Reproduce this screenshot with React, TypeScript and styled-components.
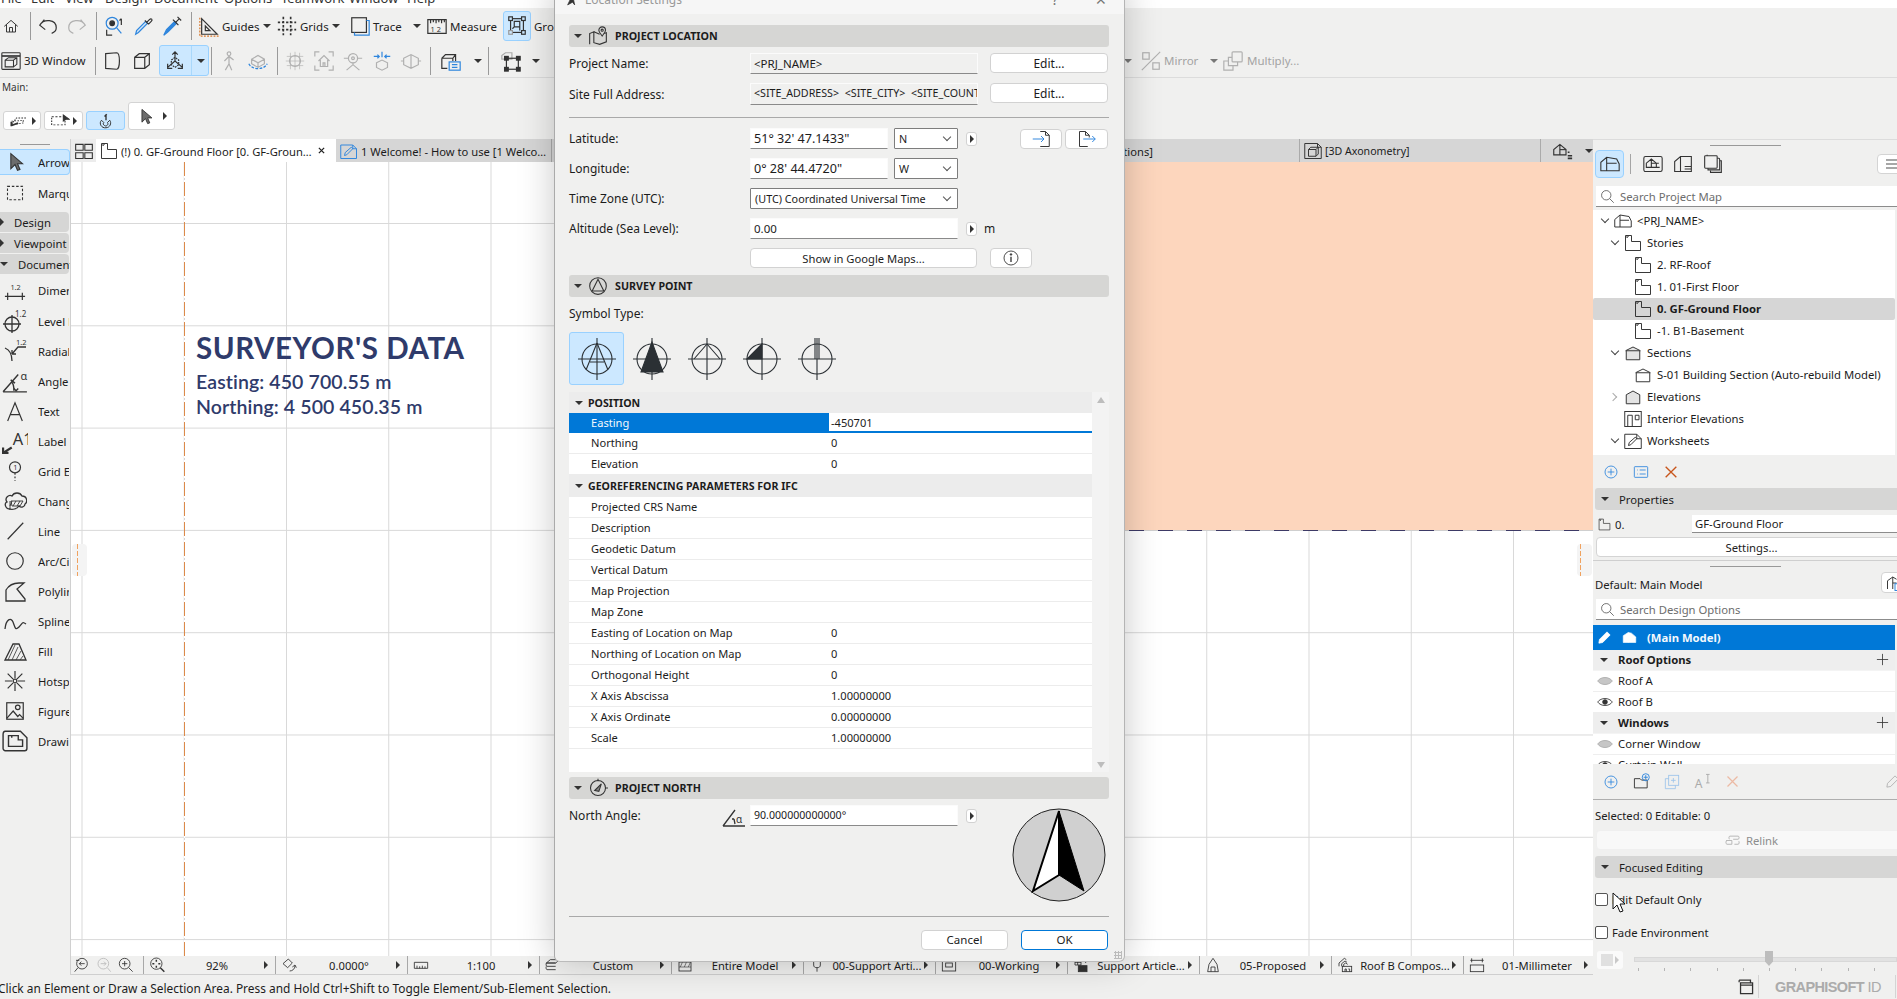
import React from 'react';
import styled, { createGlobalStyle } from 'styled-components';

const Global = createGlobalStyle`
  html, body { margin: 0; padding: 0; height: 100%; overflow: hidden; background: #f0f0ef; }
  body { font-family: "Noto Sans", "Open Sans", sans-serif; font-size: 12px; color: #1c1c1c; }
  * { box-sizing: border-box; }
`;

const BLUE = '#2f86dd';
const ORANGE = '#d9772b';

const icons: Record<string, React.ReactNode> = {
  home: <path d="M3 12.5 12 4.5l9 8M6 10v10h12V10M10 20v-6h4v6" />,
  undo: <path d="M8 5 3 11l6 5M3 11c4-7 18-7 18 3 0 3-2 5-5 6" />,
  redo: <path d="M16 5l5 6-6 5M21 11c-4-7-18-7-18 3 0 3 2 5 5 6" />,
  find: <><circle cx="10" cy="9" r="6.5" stroke={BLUE} /><circle cx="10" cy="9" r="2.5" fill="#333" /><path d="M15 14l5 6" stroke={BLUE} /><path d="M20 4v7M18 6l2-2M4 16v6h6" /></>,
  drop: <><path d="M4 21l1-4L15 7l2 2L7 19z" stroke={BLUE} fill="#cfe4f8" /><path d="M14 6l4 4M16 8l3-3c2-2 4 0 2 2l-3 3" /></>,
  syringe: <><path d="M3 22l3-6 9-9 2 2-9 9z" fill={BLUE} stroke={BLUE} /><path d="M13 5l6 6M16 8l4-4M18 2l4 4" /></>,
  guides: <><path d="M4 21V4l17 17z" /><path d="M8 17v-5l5 5z" /><path d="M2 3v20h21" stroke={ORANGE} strokeDasharray="2 1.5" /></>,
  grids: <path d="M2 8h20M2 16h20M8 2v20M16 2v20" strokeDasharray="2.5 2" strokeWidth="1.8" />,
  trace: <><rect x="3" y="3" width="16" height="16" /><path d="M19 6h3v16H6v-3" stroke={BLUE} /></>,
  measure: <><path d="M2 5h20v15H2zM5 5v4M8 5v3M11 5v4M14 5v3M17 5v4M20 5v3" /><text x="5" y="18" fontSize="8" fill="#333" stroke="none">1 2</text></>,
  group: <><rect x="5" y="4" width="14" height="15" /><rect x="3" y="2" width="4" height="4" fill="#cce8ff" /><rect x="17" y="2" width="4" height="4" fill="#cce8ff" /><rect x="3" y="17" width="4" height="4" stroke="#999" fill="#cce8ff" /><rect x="17" y="17" width="4" height="4" fill="#cce8ff" /><path d="M9 7h6v6H9zM9 13l-2 2M15 13v4" /></>,
  window3d: <><rect x="1" y="2" width="22" height="20" rx="1" /><path d="M1 6h22" strokeWidth="2" /><path d="M5 11h10v8H5zM5 11l4-3h10v8l-4 3M15 11l4-3" /></>,
  front: <path d="M4 4l12-1c4 0 4 18 0 18L4 20zM16 3c4 0 4 18 0 18" />,
  cube: <path d="M4 8l5-4h11v12l-5 4H4zM4 8h11v12M15 8l5-4" />,
  axes: <><path d="M12 2v10M9 5l3-3 3 3M12 12l-8 7M12 12l8 7M4 15v5h5M20 15v5h-5" /><path d="M8 11l4-3 4 3v5l-4 3-4-3z" strokeDasharray="2 1" /></>,
  walk: <><circle cx="12" cy="4" r="2" /><path d="M12 7v8l-4 7M12 15l3 7M7 12l5-5 5 4" /></>,
  orbit: <><path d="M5 10l7-4 7 4v5l-7 4-7-4zM5 10l7 4 7-4M12 14v5" /><path d="M2 15c3 7 17 7 20 0" stroke={BLUE} strokeDasharray="3 1.5" /></>,
  tgt: <><circle cx="12" cy="12" r="6" /><path d="M12 2v20M2 12h20M7 3v18M17 3v18M3 7h18M3 17h18" strokeWidth="0.7" /></>,
  frameHouse: <path d="M2 7V2h5M17 2h5v5M2 17v5h5M17 22h5v-5M6 12l6-6 6 6M8 11v7h8v-7M11 18v-4h2v4" />,
  camera: <><circle cx="12" cy="9" r="5" /><circle cx="12" cy="9" r="1.5" /><path d="M2 9h5M17 9h5M12 14v2M5 22l7-6 7 6" /></>,
  explode: <><path d="M6 14l6-3 6 3v5l-6 3-6-3z" /><path d="M3 7h6M21 7h-6M12 2v6M7 5l2 2-2 2M17 5l-2 2 2 2" stroke={BLUE} /></>,
  ghost: <path d="M4 9l8-4 8 4v7l-8 4-8-4zM12 5v15M1 12h3M20 12h3" />,
  boxList: <><path d="M2 9l4-4h11v7M2 9h12v3M2 9v11h6M14 9l3-4" /><rect x="10" y="13" width="12" height="9" stroke={BLUE} /><path d="M13 16h6M13 19h6" stroke={BLUE} /></>,
  cubes: <><path d="M2 6l4-3h7v7H2z" stroke="#aaa" /><rect x="7" y="9" width="13" height="12" /><rect x="5" y="7" width="4" height="4" fill="#333" /><rect x="18" y="7" width="4" height="4" fill="#333" /><rect x="5" y="19" width="4" height="4" fill="#333" /><rect x="18" y="19" width="4" height="4" fill="#333" /></>,
  mirror: <><rect x="3" y="3" width="7" height="7" /><rect x="14" y="14" width="7" height="7" /><path d="M22 2 2 22" /></>,
  multiply: <><rect x="11" y="2" width="11" height="11" rx="1" /><path d="M11 8H7v9h10v-4M7 12H2v10h10v-5" /></>,
  snap: <><path d="M3 18l6-10h12M3 13l14-1v4l-14 3z" strokeDasharray="2 1.5" /><path d="M3 20l8-4M3 14v7" strokeWidth="2.4" /></>,
  marqueeArrow: <><rect x="2" y="6" width="16" height="13" strokeDasharray="2.5 2" /><path d="M16 3v10l3-3h4z" fill="#333" /></>,
  magnet: <><path d="M6 11c-4 4 0 11 6 10 5 0 8-6 5-10l-3 3c2 3-2 6-4 4-2-1-2-3-1-4z" /><path d="M12 3v8M10 6l3-3" strokeWidth="1.8" /></>,
  arrow: <path d="M7 2v18l5-5 3 7 3-1-3-7h6z" fill="#6c6c6c" stroke="#333" />,
  marquee: <rect x="3" y="4" width="18" height="16" strokeDasharray="3 2.2" />,
  dim: <><path d="M1 19h22M4 15v8M20 15v8" /><text x="7" y="12" fontSize="8" fill="#333" stroke="none">1.2</text></>,
  levelDim: <><circle cx="9" cy="15" r="7" /><path d="M9 6v18M0 15h18" /><text x="12" y="8" fontSize="8" fill="#333" stroke="none">1.2</text></>,
  radial: <><path d="M2 9c5 2 7 6 7 13M9 15l6-7h8M9 15v-4M9 15h4" /><text x="13" y="6" fontSize="7.5" fill="#333" stroke="none">1.2</text></>,
  angle: <><path d="M1 22h22M1 22L15 6M9 13c2 2 2 5 2 8" /><path d="M8 11l4 3M11 19l2 2 2-2" /><text x="17" y="11" fontSize="10" fill="#333" stroke="none">α</text></>,
  textA: <path d="M4 23 12 3l8 20M7 16h10" />,
  label: <><path d="M1 23l8-5M1 18v5h5" strokeWidth="2" /><text x="10" y="16" fontSize="15" fill="#333" stroke="none">A1</text></>,
  gridEl: <><circle cx="12" cy="8" r="6" /><text x="10" y="11" fontSize="8" fill="#333" stroke="none">1</text><path d="M12 14v9" strokeDasharray="2 2" /></>,
  change: <><path d="M7 20c-5 0-6-6-3-7-3-4 2-8 5-6 2-4 8-4 10 0 5 0 6 6 3 8 0 3-4 4-6 2-2 3-7 4-9 3z" /><path d="M8 12h12l-3 5H9zM7 12v9M9 12l-2 5M13 12l-3 5M17 12l-3 5" strokeWidth=".9" /></>,
  line: <path d="M4 21 21 3" />,
  circle: <circle cx="12" cy="12" r="9" />,
  polyline: <path d="M3 22V11c3-5 8-7 13-7h5l-7 6 8 10v2z" />,
  spline: <path d="M2 20C3 10 8 8 10 13s2 9 6 5 3-6 7-3" />,
  fill: <><path d="M2 21 10 5h6l7 16z" /><path d="M5 21 12 6M9 21l6-13M13 21l5-9M17 21l3-4" strokeWidth=".8" /></>,
  hotspot: <><circle cx="12" cy="12" r="2" /><path d="M12 1v8M12 15v8M1 12h8M15 12h8M4 4l6 6M14 14l6 6M20 4l-6 6M10 14l-6 6" /></>,
  figure: <><rect x="3" y="3" width="18" height="18" /><circle cx="15" cy="8" r="2.5" /><path d="M3 20l7-8 5 6 2-2 4 4" /></>,
  drawing: <><path d="M1 6c0-2 1-3 2-3h14l6 6v10c0 2-1 2-2 2H3c-1 0-2-1-2-2z" /><path d="M6 7h9v4h4v6H6zM9 7v2" /></>,
  panelGrid: <path d="M2 4h9v7H2zM13 4h9v7h-9zM2 14h9v7H2zM13 14h9v7h-9z" />,
  plan: <path d="M2 2h8v8h12v12H2zM4 2v3l2-2" />,
  sheet: <><path d="M1 4h16l5 5v13H1zM17 4v5h5" stroke={BLUE} /><path d="M6 18l1-4 8-7 2 2-8 8z" stroke={BLUE} /></>,
  xcube: <><path d="M1 2h17l5 5v15H1zM18 2v5h5" /><path d="M6 10h10v9H6zM6 10l3-3h10v9l-3 3M16 10l3-3" /></>,
  closeX: <path d="M5 5l14 14M19 5 5 19" stroke="#222" strokeWidth="3.4" />,
  view: <><path d="M2 17v-6l7-6 7 6v6zM9 5v12" /><path d="M9 11h7" /><path d="M18 14h2M18 18h5M18 21h5" strokeWidth="1.8" /></>,
  mapHouse: <><path d="M1 20V10l7-6 12 2 3 6v8zM8 4v16M8 11h12" /></>,
  viewMap: <><rect x="1" y="3" width="22" height="18" rx="2" /><path d="M4 16v-5l6-5 6 5v5zM10 6v10M10 11h9M16 16h4" /></>,
  layout: <path d="M2 21V9l7-6h13v18zM9 3v18M14 15h8M14 18h8" />,
  publisher: <><rect x="2" y="2" width="15" height="15" rx="1" /><path d="M5 2V1M17 5h2c1 0 1 1 1 2v12H6v-2M20 8h2v14H9v-2" /></>,
  search: <><circle cx="10" cy="10" r="7.5" stroke="#555" /><path d="M15.5 15.5 22 22" stroke="#555" /></>,
  section: <path d="M2 9l10-5 10 5M3 9h18v12H3z" />,
  sectionFill: <path d="M2 9l10-5 10 5M3 9h18v12H3z" fill="#e4e4e4" />,
  elevation: <path d="M3 21V9l9-5 9 5v12z" fill="#e4e4e4" />,
  interior: <><rect x="1" y="2" width="22" height="20" /><path d="M5 22V7h6v15M15 7h5v6h-5z" /></>,
  worksheet: <><path d="M1 3h16l6 6v13H1zM17 3v6h6" /><path d="M6 18l1-4 8-7 2 2-8 8z" /></>,
  plusCircle: <><circle cx="12" cy="12" r="9" stroke={BLUE} /><path d="M12 7v10M7 12h10" stroke={BLUE} /></>,
  listCard: <><rect x="2" y="4" width="20" height="16" rx="1" stroke={BLUE} /><path d="M6 9h1M10 9h9M6 15h1M10 15h9" stroke={BLUE} /></>,
  cross: <path d="M4 4l16 16M20 4 4 20" stroke="#c8551b" strokeWidth="2" />,
  crossOff: <path d="M4 4l16 16M20 4 4 20" stroke="#ecbaa4" strokeWidth="2" />,
  eye: <><path d="M1 12c5-7 17-7 22 0-5 7-17 7-22 0z" /><circle cx="12" cy="12" r="3.5" fill="#333" /></>,
  eyeOff: <path d="M1 12c5-7 17-7 22 0-5 7-17 7-22 0z" fill="#c6c6c6" stroke="#aaa" />,
  pencil: <path d="M3 21l1-6L16 3l5 5L9 20z" fill="#fff" stroke="#fff" />,
  pencilOff: <path d="M3 21l1-6L16 3l5 5L9 20z" stroke="#aaa" />,
  houseWhite: <path d="M2 20V9l8-5 5 1 7 6v9zM10 4v16M10 12h12" stroke="#fff" fill="#fff" strokeWidth="1" />,
  folderPlus: <><path d="M2 21V8h8l2 2h8v11z" /><circle cx="18" cy="6" r="5" stroke={BLUE} /><path d="M18 3v6M15 6h6" stroke={BLUE} /></>,
  copyPlus: <><rect x="7" y="2" width="15" height="15" stroke="#9cc4ea" /><path d="M7 7H2v15h15v-5M14 6v7M10.5 9.5h7" stroke="#9cc4ea" /></>,
  rename: <><text x="1" y="21" fontSize="17" fill="#aaa" stroke="none">A</text><path d="M17 2h5M19.5 2v12M17 14h5" stroke="#aaa" /></>,
  plus: <path d="M12 3v18M3 12h18" />,
  relink: <path d="M2 12h9v6H3c-2 0-2-6 0-6M13 10h8c2 0 2-5 0-5H8c-2 0-2 3-1 5M15 18h6c2 0 2-4 1-5" stroke="#aaa" />,
  cardWin: <><path d="M3 3h16v3M3 3v3M5 7h17v15H5zM5 10h17" strokeWidth="1.8" /></>,
  zoomPrev: <><circle cx="12" cy="10" r="8" /><path d="M6 16l-5 6M8 10h8M8 10l3-3M8 10l3 3M3 5h5" /></>,
  zoomNext: <><circle cx="11" cy="10" r="8" stroke="#bbb" /><path d="M17 16l5 6M7 10h8M15 10l-3-3M15 10l-3 3" stroke="#bbb" /></>,
  zoomIn: <><circle cx="10" cy="10" r="8" /><path d="M16 16l6 6M10 6v8M6 10h8" /></>,
  fit: <><circle cx="11" cy="10" r="8.5" /><path d="M17 16l6 6M11 4v3M11 13v3M5 10h3M14 10h3" strokeWidth="2.2" /></>,
  rotate: <><path d="M3 10l8-7 6 6-7 7zM13 21c4 0 8-3 8-8M17 15l4-3 2 4" /></>,
  ruler: <path d="M2 8h20v9H2zM6 13v4M10 14v3M14 13v4M18 14v3" />,
  layers: <path d="M2 9l6-5h14l-6 5zM2 9h14M2 9c-1 2 0 5 1 5h13M2 14c-1 2 0 5 1 5h13" />,
  model: <><rect x="3" y="3" width="18" height="18" /><path d="M3 8h18M3 15h18M5 15l3-7M11 15l3-7M17 15l3-7" strokeWidth=".9" /></>,
  pen: <path d="M7 2v10c0 3 2 4 5 4s5-1 5-4V2M12 16v6" />,
  rect: <><rect x="2" y="3" width="20" height="18" /><rect x="7" y="9" width="10" height="6" /></>,
  override: <><path d="M3 3h9M3 3v9h9M12 3v9M3 8h9M7 3v9" /><rect x="8" y="13" width="13" height="9" fill="#333" /><path d="M19 3v6M16 6h6" /></>,
  reno: <path d="M4 22l2-11 6-9 6 9 2 11zM9 22v-7h6v7" />,
  roof: <><path d="M3 14V9l8-7 3 2M7 14v-4l5-4 3 2M10 14v-3l3-2 3 2" /><rect x="8" y="14" width="14" height="8" /><path d="M12 22v-4h2v4M17 18h2v4" /></>,
  dimBar: <><path d="M2 5h20M4 2v6M20 2v6" /><rect x="2" y="12" width="20" height="10" /></>,
  pin: <><path d="M2 22V9l5-2v13l7 2 8-3V8l-6 2" /><path d="M7 7l7 3" /><path d="M17 12c-3-4-4-5-4-7a4 4 0 1 1 8 0c0 2-1 3-4 7z" fill="#d6d6d4" /><circle cx="17" cy="5" r="1.3" /></>,
  surveyRing: <><circle cx="12" cy="12" r="10" /><path d="M12 4 5 18h14z" /></>,
  northRing: <><circle cx="12" cy="12" r="9" /><path d="M16 7 8 15l5 1zM12 1v3M21 12h3" fill="#888" /></>,
  logo: <path d="M3 22 12 3l4 19-4-5z" fill="#333" stroke="#333" />,
  importFile: <><path d="M11 2h7l5 5v15H11" /><path d="M18 2v5h5" /><path d="M1 12h15M12 8l4 4-4 4" stroke={BLUE} /></>,
  exportFile: <><path d="M13 22H2V2h8l5 5v3M10 2v5h5" /><path d="M7 12h16M19 8l4 4-4 4" stroke={BLUE} /></>,
  info: <><circle cx="12" cy="12" r="10.5" /><path d="M12 10v8" strokeWidth="2" /><circle cx="12" cy="6.7" r="1.2" fill="#333" /></>,
  northAngle: <><path d="M1 22h22M1 22 13 6" /><path d="M12 15h-2M12 15l1 5" /><text x="14" y="19" fontSize="10" fill="#333" stroke="none">α</text></>,
  hamburger: <path d="M3 6h18M3 12h18M3 18h18" />,
  houseBlue: <><path d="M2 20V9l7-5 5 3M9 4v16M9 12h5" /><rect x="12" y="13" width="10" height="9" stroke={BLUE} /></>,
};

const Svg = styled.svg<{ $color?: string; $sw?: number }>`
  display: block;
  flex: none;
  fill: none;
  stroke: ${p => p.$color || 'currentColor'};
  stroke-width: ${p => p.$sw || 1.3};
  color: #333;
`;

const Icon = ({ n, s = 20, w, h, off }: { n: string; s?: number; w?: number; h?: number; off?: boolean }) => (
  <Svg viewBox="0 0 24 24" width={w || s} height={h || s} preserveAspectRatio="none" $color={off ? '#b0b0b0' : '#333'}>
    {icons[n]}
  </Svg>
);

const Page = styled.div`
  position: relative;
  width: 1897px;
  height: 999px;
  overflow: hidden;
  display: flex;
  flex-direction: column;
  background: #f0f0ef;
`;

const MenuBar = styled.div`
  height: 8px;
  flex: none;
  background: #fff;
  overflow: hidden;
  position: relative;
  z-index: 2;
`;
const MenuList = styled.div`
  display: flex;
  margin-top: -11px;
  padding-left: 1px;
  line-height: 19px;
  font-size: 13px;
  color: #333;
  white-space: nowrap;
`;
const MenuItem = styled.span<{ $w: number }>`
  width: ${p => p.$w}px;
  flex: none;
`;

const Tools = styled.div<{ $h: number; $line?: boolean }>`
  height: ${p => p.$h}px;
  flex: none;
  display: flex;
  align-items: center;
  white-space: nowrap;
  ${p => (p.$line ? 'border-bottom: 1px solid #dcdcdc;' : '')}
`;
const Slot = styled.div<{ $w: number; $ml: number; $h?: number; $on?: boolean }>`
  flex: none;
  width: ${p => p.$w}px;
  margin-left: ${p => p.$ml}px;
  height: ${p => p.$h || 28}px;
  display: flex;
  align-items: center;
  justify-content: center;
  ${p => (p.$on ? 'background:#cce8ff; border:1px solid #99d1ff; border-radius:3px;' : '')}
`;
const Bar = styled.div`
  width: 1px;
  height: 28px;
  background: #9a9a9a;
`;
const ToolText = styled.span<{ $off?: boolean }>`
  display: block;
  width: 100%;
  font-size: 11.5px;
  color: ${p => (p.$off ? '#a3a3a3' : '#222')};
`;
const Tri = styled.span<{ $dir?: 'r' | 'd'; $c?: string }>`
  display: block;
  flex: none;
  width: 0;
  height: 0;
  ${p =>
    p.$dir === 'r'
      ? `border-top:4px solid transparent;border-bottom:4px solid transparent;border-left:4px solid ${p.$c || '#333'};`
      : `border-left:4px solid transparent;border-right:4px solid transparent;border-top:4px solid ${p.$c || '#333'};`}
`;

type TI =
  | { k: 'i'; n: string; c: number; w?: number; s?: number; off?: boolean; on?: boolean; h?: number }
  | { k: 'b'; x: number }
  | { k: 't'; x: number; w: number; t: string; off?: boolean }
  | { k: 'v'; c: number; off?: boolean }
  | { k: 'w'; x: number; w: number; h: number; n: string };

const edges = (it: TI): [number, number] => {
  if (it.k === 'i') { const w = it.w || 24; return [it.c - w / 2, it.c + w / 2]; }
  if (it.k === 'b') return [it.x, it.x + 1];
  if (it.k === 't') return [it.x, it.x + it.w];
  if (it.k === 'v') return [it.c - 4, it.c + 4];
  return [it.x, it.x + it.w];
};

const SplitMark = styled.span`
  width: 1px;
  height: 100%;
  background: #a9d8fb;
  margin: 0 5px 0 5px;
`;

const ToolRow = ({ items, h, line }: { items: TI[]; h: number; line?: boolean }) => {
  let end = 0;
  return (
    <Tools $h={h} $line={line}>
      {items.map((it, i) => {
        const [a, b] = edges(it);
        const ml = a - end;
        end = b;
        if (it.k === 'i')
          return <Slot key={i} $w={b - a} $ml={ml} $on={it.on} $h={it.h}><Icon n={it.n} s={it.s || 22} off={it.off} /></Slot>;
        if (it.k === 'b') return <Slot key={i} $w={1} $ml={ml}><Bar /></Slot>;
        if (it.k === 't') return <Slot key={i} $w={it.w} $ml={ml}><ToolText $off={it.off}>{it.t}</ToolText></Slot>;
        if (it.k === 'v') return <Slot key={i} $w={8} $ml={ml}><Tri $c={it.off ? '#777' : '#333'} /></Slot>;
        return (
          <Slot key={i} $w={it.w} $ml={ml} $on $h={it.h}>
            <Icon n={it.n} s={22} />
            <SplitMark />
            <Tri />
          </Slot>
        );
      })}
    </Tools>
  );
};

const row1: TI[] = [
  { k: 'i', n: 'home', c: 11, w: 22, s: 18 }, { k: 'b', x: 30 },
  { k: 'i', n: 'undo', c: 48 }, { k: 'i', n: 'redo', c: 77, off: true }, { k: 'b', x: 96 },
  { k: 'i', n: 'find', c: 114 }, { k: 'i', n: 'drop', c: 143 }, { k: 'i', n: 'syringe', c: 172 }, { k: 'b', x: 191 },
  { k: 'i', n: 'guides', c: 209 }, { k: 't', x: 222, w: 40, t: 'Guides' }, { k: 'v', c: 267 },
  { k: 'i', n: 'grids', c: 287 }, { k: 't', x: 300, w: 30, t: 'Grids' }, { k: 'v', c: 336 },
  { k: 'i', n: 'trace', c: 360 }, { k: 't', x: 373, w: 36, t: 'Trace' }, { k: 'v', c: 417 },
  { k: 'i', n: 'measure', c: 437 }, { k: 't', x: 450, w: 50, t: 'Measure' },
  { k: 'i', n: 'group', c: 517, w: 28, h: 30, on: true }, { k: 't', x: 534, w: 60, t: 'Grouping' },
];
const row2: TI[] = [
  { k: 'i', n: 'window3d', c: 11, w: 22, s: 20 }, { k: 't', x: 24, w: 62, t: '3D Window' }, { k: 'b', x: 95 },
  { k: 'i', n: 'front', c: 113 }, { k: 'i', n: 'cube', c: 142 },
  { k: 'w', x: 159, w: 50, h: 31, n: 'axes' }, { k: 'b', x: 211 },
  { k: 'i', n: 'walk', c: 229, off: true }, { k: 'i', n: 'orbit', c: 258, off: true }, { k: 'b', x: 277 },
  { k: 'i', n: 'tgt', c: 295, off: true }, { k: 'i', n: 'frameHouse', c: 324, off: true }, { k: 'i', n: 'camera', c: 353, off: true },
  { k: 'i', n: 'explode', c: 382, off: true }, { k: 'i', n: 'ghost', c: 411, off: true }, { k: 'b', x: 430 },
  { k: 'i', n: 'boxList', c: 451 }, { k: 'v', c: 478 }, { k: 'b', x: 488 },
  { k: 'i', n: 'cubes', c: 511 }, { k: 'v', c: 536 },
  { k: 'v', c: 1128, off: true }, { k: 'i', n: 'mirror', c: 1151, off: true },
  { k: 't', x: 1164, w: 40, t: 'Mirror', off: true }, { k: 'v', c: 1214, off: true },
  { k: 'i', n: 'multiply', c: 1233, off: true }, { k: 't', x: 1247, w: 60, t: 'Multiply...', off: true },
];

const MainRow = styled.div`
  height: 61px;
  flex: none;
  padding: 3px 0 0 2px;
  position: relative;
`;
const MainLabel = styled.div`
  font-size: 10px;
  line-height: 13px;
  color: #333;
`;
const MainBtns = styled.div`
  display: flex;
  align-items: flex-end;
  gap: 3px;
  margin: 8px 0 0 1px;
  height: 36px;
`;
const MainBtn = styled.div<{ $w: number; $h: number; $on?: boolean }>`
  width: ${p => p.$w}px;
  height: ${p => p.$h}px;
  margin-bottom: 8px;
  background: ${p => (p.$on ? '#cce8ff' : '#fff')};
  border: 1px solid ${p => (p.$on ? '#99d1ff' : '#d4d4d4')};
  border-radius: 3px;
  display: flex;
  align-items: center;
  justify-content: space-around;
  padding: 0 3px;
`;

const Middle = styled.div`
  height: 836px;
  flex: none;
  display: flex;
`;
const Toolbox = styled.div`
  width: 71px;
  flex: none;
  overflow: hidden;
  border-right: 1px solid #d0d0d0;
`;
const Grip = styled.div<{ $w: number }>`
  width: ${p => p.$w}px;
  height: 1px;
  background: #999;
  margin: 5px auto 4px;
`;
const ToolEntry = styled.div<{ $on?: boolean; $h?: number }>`
  display: flex;
  align-items: center;
  height: ${p => p.$h || 30}px;
  white-space: nowrap;
  overflow: hidden;
  font-size: 11.3px;
  ${p => (p.$on ? 'background:#cce8ff;border:1px solid #99d1ff;border-left:0;border-radius:0 4px 4px 0;' : '')}
`;
const ToolIco = styled.span`
  width: 30px;
  flex: none;
  display: flex;
  justify-content: center;
  margin-right: 8px;
`;
const ToolLabel = styled.span`
  display: block;
  width: 31px;
  flex: none;
  overflow: hidden;
`;
const ToolHead = styled.div<{ $mt?: number }>`
  height: 20px;
  margin: ${p => p.$mt || 1}px 1px 0 0;
  background: #d6d6d5;
  border-radius: 0 4px 4px 0;
  display: flex;
  align-items: center;
  gap: 10px;
  font-size: 11.3px;
  padding-left: 0;
`;

const Center = styled.div`
  width: 1522px;
  flex: none;
  display: flex;
  flex-direction: column;
`;
const TabBar = styled.div`
  height: 23px;
  flex: none;
  display: flex;
  background: #d6d6d6;
  white-space: nowrap;
`;
const GridBtn = styled.div`
  width: 26px;
  background: #ececec;
  display: flex;
  align-items: center;
  justify-content: center;
`;
const Tab = styled.div<{ $on?: boolean; $w?: number }>`
  width: ${p => p.$w || 241}px;
  flex: none;
  display: flex;
  align-items: center;
  padding: 0 4px;
  gap: 3px;
  overflow: hidden;
  background: ${p => (p.$on ? '#fff' : 'transparent')};
  border-right: ${p => (p.$on ? '0' : '1px solid #aaa')};
`;
const TabText = styled.span<{ $pad?: number; $fs?: number }>`
  flex: 1;
  overflow: hidden;
  text-overflow: ellipsis;
  padding-top: 1px;
  padding-left: ${p => p.$pad || 0}px;
  font-size: ${p => p.$fs || 11.2}px;
`;
const TabClose = styled.span`
  flex: none;
  margin-right: 6px;
`;
const TabEnd = styled.div`
  flex: 1;
  display: flex;
  align-items: center;
  gap: 12px;
  padding-left: 11px;
`;
const Canvas = styled.div`
  flex: 1;
  position: relative;
  overflow: hidden;
  background-color: #fff;
  background-image:
    linear-gradient(to right, #d9d9d9 1px, transparent 1px),
    linear-gradient(to bottom, #d9d9d9 1px, transparent 1px);
  background-size: 102.25px 102.3px;
  background-position: 10.5px 61px;
`;
const Origin = styled.div`
  position: absolute;
  left: 113px;
  top: 0;
  bottom: 0;
  width: 1px;
  background: repeating-linear-gradient(to bottom, #dc8a4a 0 14px, #fff 14px 16px, #d5d5d5 16px 18px, #fff 18px 20px);
`;
const Peach = styled.div`
  position: absolute;
  left: 1000px;
  right: 0;
  top: 0;
  height: 369px;
  background: #fdd6bd;
  &::after {
    content: '';
    position: absolute;
    left: 0;
    right: 0;
    bottom: 0;
    height: 1px;
    background: repeating-linear-gradient(to right, #3d3a66 0 15px, #cfcfcf 15px 29px);
  }
`;
const Handle = styled.div<{ $side: 'l' | 'r' }>`
  position: absolute;
  ${p => (p.$side === 'l' ? 'left: 1px;' : 'right: 1px;')}
  top: 382px;
  width: 15px;
  height: 32px;
  background: #f4f4f4;
  border-radius: 4px;
  display: flex;
  justify-content: center;
  &::after {
    content: '';
    width: 1px;
    height: 100%;
    margin-left: ${p => (p.$side === 'l' ? '-5px' : '-8px')};
    background: repeating-linear-gradient(to bottom, #f0a25f 0 5px, transparent 5px 7px);
  }
`;
const Survey = styled.div`
  position: absolute;
  left: 125px;
  top: 168px;
  color: #2f3b6b;
  font-family: Lato, "Liberation Sans", sans-serif;
  white-space: nowrap;
`;
const SurveyTitle = styled.div`
  font-size: 29.5px;
  line-height: 36px;
  font-weight: 700;
  letter-spacing: 0.55px;
  margin-bottom: 3px;
`;
const SurveyLine = styled.div`
  font-size: 19.5px;
  line-height: 25px;
  font-weight: 600;
  letter-spacing: 0.1px;
`;

const Quick = styled.div`
  height: 19px;
  flex: none;
  display: flex;
  align-items: center;
  overflow: hidden;
  white-space: nowrap;
  background: #f0f0ef;
  border-bottom: 1px solid #cfcfcf;
`;
const QuickZoom = styled.div`
  width: 72px;
  flex: none;
  display: flex;
  align-items: center;
  gap: 6px;
  padding-left: 3px;
`;
const QuickCell = styled.div`
  width: 132px;
  height: 100%;
  flex: none;
  display: flex;
  align-items: center;
  border-left: 1px solid #a8a8a8;
  padding-right: 7px;
  font-size: 11.2px;
`;
const QuickIco = styled.span`
  width: 26px;
  flex: none;
  display: flex;
  justify-content: center;
`;
const QuickText = styled.span`
  flex: 1;
  text-align: center;
  overflow: hidden;
  padding-top: 1px;
`;

const Panel = styled.div`
  width: 304px;
  flex: none;
  overflow: hidden;
  border-top: 1px solid #dcdcdc;
  display: flex;
  flex-direction: column;
  white-space: nowrap;
  font-size: 11.3px;
`;
const PanelTabs = styled.div`
  height: 28px;
  flex: none;
  display: flex;
  align-items: center;
  padding-left: 2px;
  position: relative;
`;
const PanelTab = styled.div<{ $on?: boolean }>`
  width: ${p => (p.$on ? 29 : 30)}px;
  height: 28px;
  flex: none;
  display: flex;
  align-items: center;
  justify-content: center;
  ${p => (p.$on ? 'background:#cce8ff;border:1px solid #99d1ff;border-radius:4px;' : '')}
`;
const PanelBar = styled.div`
  width: 1px;
  height: 20px;
  background: #a5a5a5;
  margin: 0 7px 0 6px;
`;
const Hamburger = styled.div`
  position: absolute;
  left: 284px;
  top: 4px;
  width: 30px;
  height: 20px;
  background: #fff;
  border: 1px solid #d4d4d4;
  border-radius: 4px;
  padding: 1px 0 0 6px;
`;
const Search = styled.div<{ $mt: number }>`
  height: 21px;
  flex: none;
  margin: ${p => p.$mt}px 0 0 3px;
  background: #fff;
  border-bottom: 1px solid #8c8c8c;
  display: flex;
  align-items: center;
  gap: 5px;
  padding-left: 4px;
  color: #6d6d6d;
`;
const Tree = styled.div`
  height: 245px;
  flex: none;
  margin-top: 3px;
  margin-right: 2px;
  background: #fff;
`;
const TreeRow = styled.div<{ $lv: number; $on?: boolean }>`
  height: 22px;
  display: flex;
  align-items: center;
  gap: 5px;
  padding-left: ${p => 21 + p.$lv * 10}px;
  padding-bottom: 1px;
  position: relative;
  ${p => (p.$on ? 'background:#d6d6d6;border-radius:2px;font-weight:700;' : '')}
`;
const Chevron = styled.span<{ $open: boolean }>`
  position: absolute;
  width: 6px;
  height: 6px;
  margin-left: -12px;
  border-right: 1.6px solid ${p => (p.$open ? '#444' : '#aaa')};
  border-bottom: 1.6px solid ${p => (p.$open ? '#444' : '#aaa')};
  transform: ${p => (p.$open ? 'translateY(-2px) rotate(45deg)' : 'translateX(-2px) rotate(-45deg)')};
`;
const IconStrip = styled.div<{ $h: number; $gap: number; $line?: boolean }>`
  height: ${p => p.$h}px;
  flex: none;
  display: flex;
  align-items: center;
  gap: ${p => p.$gap}px;
  padding-left: 10px;
  ${p => (p.$line ? 'border-bottom: 1px solid #aeaeae;' : '')}
  position: relative;
`;
const EndIcon = styled.span`
  position: absolute;
  left: 292px;
`;
const PanelHead = styled.div<{ $mt?: number }>`
  height: 22px;
  flex: none;
  margin: ${p => p.$mt || 0}px 0 0 2px;
  background: #d6d6d5;
  border-radius: 3px 0 0 3px;
  display: flex;
  align-items: center;
  gap: 10px;
  padding-left: 6px;
`;
const StoryRow = styled.div`
  height: 22px;
  flex: none;
  margin-top: 3px;
  display: flex;
  align-items: center;
  padding-left: 5px;
  gap: 4px;
`;
const StoryId = styled.span`
  width: 73px;
  flex: none;
`;
const StoryField = styled.div`
  flex: 1;
  height: 18px;
  background: #fff;
  border-bottom: 1px solid #8c8c8c;
  padding-left: 3px;
  line-height: 17px;
`;
const WideBtn = styled.div<{ $mt: number; $off?: boolean }>`
  height: 20px;
  flex: none;
  margin: ${p => p.$mt}px -10px 0 3px;
  background: ${p => (p.$off ? '#f8f8f8' : '#fff')};
  border: 1px solid ${p => (p.$off ? '#efefef' : '#d4d4d4')};
  border-radius: 4px;
  display: flex;
  align-items: center;
  justify-content: center;
  gap: 6px;
  color: ${p => (p.$off ? '#8d8d8d' : '#222')};
`;
const HSep = styled.div`
  height: 1px;
  flex: none;
  margin-top: 3px;
  background: #cfcfcf;
`;
const OptionTitle = styled.div`
  height: 22px;
  flex: none;
  margin-top: 2px;
  padding-left: 2px;
  position: relative;
  display: flex;
  align-items: center;
`;
const SideBtn = styled.div`
  position: absolute;
  left: 288px;
  top: -1px;
  width: 30px;
  height: 21px;
  background: #fff;
  border: 1px solid #d4d4d4;
  border-radius: 4px;
  padding: 1px 0 0 4px;
`;
const OptionList = styled.div`
  height: 139px;
  flex: none;
  margin-top: 5px;
  overflow: hidden;
  margin-right: 2px;
`;
const OptionMain = styled.div`
  height: 25px;
  background: #0078d7;
  margin-right: -2px;
  color: #f4f9fd;
  font-weight: 700;
  display: flex;
  align-items: center;
  padding-left: 4px;
  gap: 10px;
`;
const OptionGroup = styled.div`
  height: 21px;
  background: #eeeeee;
  font-weight: 700;
  display: flex;
  align-items: center;
  padding-left: 7px;
  padding-bottom: 1px;
  gap: 10px;
  position: relative;
  border-bottom: 1px solid #f4f4f4;
`;
const OptionRow = styled.div`
  height: 21px;
  background: #fff;
  border-bottom: 1px solid #eeeeee;
  display: flex;
  align-items: center;
  padding-left: 4px;
  padding-bottom: 1px;
  gap: 5px;
`;
const GroupPlus = styled.span`
  position: absolute;
  left: 282px;
`;
const CaptionRow = styled.div<{ $mt: number }>`
  height: 18px;
  flex: none;
  margin-top: ${p => p.$mt}px;
  padding-left: 2px;
  line-height: 18px;
`;
const CheckRow = styled.div<{ $mt: number }>`
  height: 18px;
  flex: none;
  margin-top: ${p => p.$mt}px;
  padding-left: 2px;
  display: flex;
  align-items: center;
  gap: 4px;
`;
const Check = styled.span`
  width: 13px;
  height: 13px;
  flex: none;
  background: #fff;
  border: 1px solid #555;
  border-radius: 2px;
`;
const SliderRow = styled.div`
  height: 22px;
  flex: none;
  margin-top: 10px;
  display: flex;
  padding-left: 4px;
  gap: 11px;
`;
const SliderBtn = styled.div`
  width: 26px;
  height: 18px;
  flex: none;
  background: #fafafa;
  border-radius: 3px;
  display: flex;
  align-items: center;
  justify-content: center;
  gap: 2px;
`;
const SliderSwatch = styled.span`
  width: 12px;
  height: 12px;
  background: #e0e0e0;
`;
const SliderTrack = styled.div`
  flex: 1;
  height: 20px;
  position: relative;
  &::before {
    content: '';
    position: absolute;
    left: 0;
    right: 0;
    top: 6px;
    height: 3px;
    background: #e2e2e2;
    border: 1px solid #d8d8d8;
  }
  &::after {
    content: '';
    position: absolute;
    left: 4px;
    right: 0;
    top: 17px;
    height: 3px;
    background: repeating-linear-gradient(to right, #b5b5b5 0 1px, transparent 1px 26.2px);
  }
`;
const SliderThumb = styled.span`
  position: absolute;
  left: 131px;
  top: 0;
  width: 8px;
  height: 15px;
  background: #bdbdbd;
  clip-path: polygon(0 0, 100% 0, 100% 70%, 50% 100%, 0 70%);
  z-index: 1;
`;
const Cursor = styled.svg`
  position: absolute;
  left: 1612px;
  top: 892px;
  z-index: 3;
`;

const Status = styled.div`
  height: 23px;
  flex: none;
  display: flex;
  align-items: center;
  font-size: 11.9px;
  white-space: nowrap;
  position: relative;
`;
const StatusText = styled.span`
  margin-left: -2px;
  padding-top: 3px;
  flex: 1;
`;
const StatusEnd = styled.div`
  width: 150px;
  height: 100%;
  display: flex;
  align-items: center;
  flex: none;
  margin-right: 10px;
`;
const StatusIco = styled.span`
  width: 19px;
  flex: none;
  margin-right: 0;
`;
const StatusLogo = styled.span`
  border-left: 1px solid #d4d4d4;
  border-right: 1px solid #d4d4d4;
  height: 100%;
  margin-left: 2px;
  padding: 1px 14px 0 16px;
  line-height: 23px;
  font-family: "Liberation Sans", Arial, sans-serif;
  font-size: 14.5px;
  font-weight: 700;
  letter-spacing: -0.6px;
  color: #ababab;
`;
const LogoThin = styled.span`
  font-weight: 400;
`;

/* ---- Dialog ---- */
const Dialog = styled.div`
  position: absolute;
  left: 554px;
  top: -16px;
  width: 571px;
  height: 978px;
  z-index: 5;
  background: #f0f0ef;
  border-left: 1px solid #aaa;
  border-right: 1px solid #b4b4b4;
  border-bottom: 1px solid #bbb;
  border-radius: 0 0 6px 6px;
  box-shadow: 0 0 36px rgba(0, 0, 0, 0.22);
  display: flex;
  flex-direction: column;
  padding: 0 15px 0 14px;
`;
const TitleBar = styled.div`
  height: 30px;
  flex: none;
  margin: 0 -15px 0 -14px;
  background: #f6f6f6;
  display: flex;
  align-items: center;
  padding: 0 0 0 11px;
  gap: 6px;
  color: #999;
  font-size: 12px;
`;
const TitleSpacer = styled.span`
  flex: 1;
`;
const TitleGlyph = styled.span`
  color: #777;
  font-size: 14px;
  width: 46px;
  text-align: center;
  margin-left: -6px;
`;
const SectionHead = styled.div<{ $mt: number }>`
  height: 22px;
  flex: none;
  margin-top: ${p => p.$mt}px;
  background: #d6d6d4;
  border-radius: 3px;
  display: flex;
  align-items: center;
  padding-left: 5px;
  gap: 6px;
  font-weight: 700;
  font-size: 10.7px;
`;
const SectionTitle = styled.span`
  margin-left: 1px;
`;
const FormRow = styled.div<{ $mt: number; $h?: number }>`
  height: ${p => p.$h || 21}px;
  flex: none;
  margin-top: ${p => p.$mt}px;
  display: flex;
  align-items: center;
`;
const FieldLabel = styled.span<{ $w?: number }>`
  width: ${p => p.$w || 181}px;
  flex: none;
  font-size: 12px;
`;
const Field = styled.div<{ $w: number; $ro?: boolean; $h?: number; $fs?: number }>`
  width: ${p => p.$w}px;
  height: ${p => p.$h || 21}px;
  flex: none;
  background: ${p => (p.$ro ? '#f0f0ef' : '#fff')};
  border: 1px solid #fbfbfb;
  border-bottom: 1px solid #8a8a8a;
  overflow: hidden;
  white-space: nowrap;
  padding: 0 4px 0 3px;
  line-height: 19px;
  font-size: ${p => p.$fs || 11.5}px;
`;
const PushBtn = styled.div<{ $w: number; $ml: number; $mb?: number; $fs?: number }>`
  width: ${p => p.$w}px;
  height: 20px;
  margin-left: ${p => p.$ml}px;
  margin-bottom: ${p => p.$mb || 0}px;
  flex: none;
  background: #fff;
  border: 1px solid #d2d2d2;
  border-radius: 4px;
  display: flex;
  align-items: center;
  justify-content: center;
  font-size: ${p => p.$fs || 12}px;
`;
const Select = styled.div<{ $w: number; $ml: number }>`
  width: ${p => p.$w}px;
  margin-left: ${p => p.$ml}px;
  height: 21px;
  flex: none;
  background: #fff;
  border: 1px solid #7d7d7d;
  border-radius: 1px;
  display: flex;
  align-items: center;
  padding: 0 6px 0 4px;
  font-size: 10.8px;
  white-space: nowrap;
`;
const SelectText = styled.span`
  flex: 1;
`;
const ChevronDown = styled.span`
  width: 6px;
  height: 6px;
  margin: -3px 1px 0 0;
  border-right: 1px solid #555;
  border-bottom: 1px solid #555;
  transform: rotate(45deg);
`;
const MiniArrow = styled.div<{ $ml: number }>`
  width: 11px;
  height: 14px;
  margin-left: ${p => p.$ml}px;
  flex: none;
  background: #fff;
  border: 1px solid #d2d2d2;
  border-radius: 3px;
  display: flex;
  align-items: center;
  justify-content: center;
`;
const Unit = styled.span`
  margin-left: 7px;
  font-size: 12px;
`;
const HRule = styled.div<{ $mt: number }>`
  height: 1px;
  flex: none;
  margin-top: ${p => p.$mt}px;
  background: #a9a9a9;
`;
const SymbolLabel = styled.div`
  height: 18px;
  flex: none;
  margin-top: 8px;
  line-height: 18px;
`;
const SymbolRow = styled.div`
  display: flex;
  flex: none;
  margin-top: 9px;
`;
const SymbolCell = styled.div<{ $on?: boolean }>`
  width: 55px;
  height: 53px;
  flex: none;
  display: flex;
  align-items: center;
  justify-content: center;
  ${p => (p.$on ? 'background:#cce8ff;border:1px solid #99d1ff;border-radius:3px;' : '')}
`;
const PropArea = styled.div`
  height: 380px;
  flex: none;
  margin-top: 7px;
  display: flex;
`;
const PropTable = styled.div`
  width: 523px;
  flex: none;
  background: #fff;
  font-size: 11.1px;
`;
const PropScroll = styled.div`
  flex: 1;
  display: flex;
  flex-direction: column;
  align-items: center;
  justify-content: space-between;
  padding: 5px 0 4px;
  background: #f3f3f3;
`;
const ScrollTri = styled.span<{ $up?: boolean }>`
  width: 0;
  height: 0;
  border-left: 4px solid transparent;
  border-right: 4px solid transparent;
  ${p => (p.$up ? 'border-bottom: 6px solid #bdbdbd;' : 'border-top: 6px solid #bdbdbd;')}
`;
const PropHead = styled.div<{ $h: number }>`
  height: ${p => p.$h}px;
  background: #ececec;
  display: flex;
  align-items: center;
  gap: 5px;
  padding-left: 6px;
  font-weight: 700;
  font-size: 10.6px;
`;
const PropRow = styled.div<{ $on?: boolean }>`
  height: 21px;
  display: flex;
  border-bottom: 1px solid #ececec;
  ${p => (p.$on ? 'height:20px;border-bottom:2px solid #0078d7;' : '')}
`;
const PropName = styled.div<{ $on?: boolean }>`
  width: 260px;
  flex: none;
  padding-left: 22px;
  line-height: 20px;
  ${p => (p.$on ? 'background:#0078d7;color:#f3f8fd;' : '')}
`;
const PropValue = styled.div`
  flex: 1;
  padding-left: 2px;
  line-height: 20px;
`;
const NorthArea = styled.div`
  display: flex;
  flex: none;
  height: 111px;
  margin-top: 6px;
  position: relative;
`;
const NorthLeft = styled.div`
  width: 443px;
  flex: none;
`;
const Footer = styled.div`
  display: flex;
  flex: none;
  justify-content: flex-end;
  margin-top: 13px;
  gap: 13px;
  padding-right: 1px;
`;
const DlgBtn = styled.div<{ $primary?: boolean }>`
  width: 87px;
  height: 20px;
  background: #fff;
  border: 1px solid ${p => (p.$primary ? '#0078d7' : '#d2d2d2')};
  border-radius: 4px;
  text-align: center;
  line-height: 18px;
  font-size: 11.5px;
`;
const ResizeGrip = styled.span`
  position: absolute;
  right: 2px;
  bottom: 2px;
  width: 8px;
  height: 8px;
  background: radial-gradient(#bbb 1px, transparent 1.2px) 0 0 / 3px 3px;
`;

const Sym = ({ v }: { v: number }) => (
  <Svg viewBox="0 0 40 44" width={40} height={44} $color="#2b3034" $sw={1.1}>
    <circle cx="20" cy="22" r="15" />
    <path d="M1 22h38M20 1v42" />
    {v === 0 && <path d="M20 6 9 33M20 6l11 27M13 25h14" />}
    {v === 1 && <path d="M20 5 9 35h22z" fill="#2b3034" />}
    {v === 2 && <path d="M20 7 7 22M20 7l13 15" />}
    {v === 3 && <path d="M20 7 5 22h15z" fill="#2b3034" />}
    {v === 4 && <path d="M18 1v21M22 1v21" />}
  </Svg>
);

const Compass = styled.svg`
  position: absolute;
  left: 443px;
  top: 3px;
`;

const tools1 = [
  ['dim', 'Dimension', 22], ['levelDim', 'Level Dimension', 24], ['radial', 'Radial Dimension', 24], ['angle', 'Angle Dimension', 26],
  ['textA', 'Text', 22], ['label', 'Label', 26], ['gridEl', 'Grid Element', 22], ['change', 'Change Marker', 24],
  ['line', 'Line', 22], ['circle', 'Arc/Circle', 22], ['polyline', 'Polyline', 24], ['spline', 'Spline', 24],
  ['fill', 'Fill', 24], ['hotspot', 'Hotspot', 22], ['figure', 'Figure', 22], ['drawing', 'Drawing', 26],
] as const;

const quickCells: [string, string][] = [
  ['fit', '92%'], ['rotate', '0.0000°'], ['ruler', '1:100'], ['layers', 'Custom'], ['model', 'Entire Model'], ['pen', '00-Support Arti...'],
  ['rect', '00-Working'], ['override', 'Support Article...'], ['reno', '05-Proposed'], ['roof', 'Roof B Compos...'], ['dimBar', '01-Millimeter'],
];

const tree: { lv: number; open?: boolean; n: string; t: string; on?: boolean }[] = [
  { lv: 0, open: true, n: 'mapHouse', t: '<PRJ_NAME>' },
  { lv: 1, open: true, n: 'plan', t: 'Stories' },
  { lv: 2, n: 'plan', t: '2. RF-Roof' },
  { lv: 2, n: 'plan', t: '1. 01-First Floor' },
  { lv: 2, n: 'plan', t: '0. GF-Ground Floor', on: true },
  { lv: 2, n: 'plan', t: '-1. B1-Basement' },
  { lv: 1, open: true, n: 'sectionFill', t: 'Sections' },
  { lv: 2, n: 'section', t: 'S-01 Building Section (Auto-rebuild Model)' },
  { lv: 1, open: false, n: 'elevation', t: 'Elevations' },
  { lv: 1, n: 'interior', t: 'Interior Elevations' },
  { lv: 1, open: true, n: 'worksheet', t: 'Worksheets' },
];

const georef: [string, string][] = [
  ['Projected CRS Name', ''], ['Description', ''], ['Geodetic Datum', ''], ['Vertical Datum', ''], ['Map Projection', ''], ['Map Zone', ''],
  ['Easting of Location on Map', '0'], ['Northing of Location on Map', '0'], ['Orthogonal Height', '0'],
  ['X Axis Abscissa', '1.00000000'], ['X Axis Ordinate', '0.00000000'], ['Scale', '1.00000000'],
];

const menus: [string, number][] = [
  ['File', 30], ['Edit', 34], ['View', 40], ['Design', 49], ['Document', 70], ['Options', 57], ['Teamwork', 68], ['Window', 58], ['Help', 40],
];

export default function App() {
  return (
    <Page>
      <Global />
      <MenuBar>
        <MenuList>{menus.map(([m, w]) => <MenuItem key={m} $w={w}>{m}</MenuItem>)}</MenuList>
      </MenuBar>
      <ToolRow items={row1} h={36} />
      <ToolRow items={row2} h={34} line />
      <MainRow>
        <MainLabel>Main:</MainLabel>
        <MainBtns>
          <MainBtn $w={38} $h={19}><Icon n="snap" w={20} h={15} /><Tri $dir="r" /></MainBtn>
          <MainBtn $w={39} $h={19}><Icon n="marqueeArrow" w={20} h={15} /><Tri $dir="r" /></MainBtn>
          <MainBtn $w={39} $h={19} $on><Icon n="magnet" s={18} /></MainBtn>
          <MainBtn $w={47} $h={28}><Icon n="arrow" s={17} /><Tri $dir="r" /></MainBtn>
        </MainBtns>
      </MainRow>
      <Middle>
        <Toolbox>
          <Grip $w={30} />
          <ToolEntry $on $h={26}><ToolIco><Icon n="arrow" s={20} /></ToolIco><ToolLabel>Arrow</ToolLabel></ToolEntry>
          <ToolEntry $h={36}><ToolIco><Icon n="marquee" s={20} /></ToolIco><ToolLabel>Marquee</ToolLabel></ToolEntry>
          <ToolHead><Tri $dir="r" /><span>Design</span></ToolHead>
          <ToolHead><Tri $dir="r" /><span>Viewpoint</span></ToolHead>
          <ToolHead><Tri /><span>Document</span></ToolHead>
          {tools1.map(([n, t, s], i) => (
            <ToolEntry key={t} $h={i === 0 ? 32 : 30}>
              <ToolIco><Icon n={n} s={s} /></ToolIco>
              <ToolLabel>{t}</ToolLabel>
            </ToolEntry>
          ))}
        </Toolbox>
        <Center>
          <TabBar>
            <GridBtn><Icon n="panelGrid" s={20} /></GridBtn>
            <Tab $on $w={240}>
              <Icon n="plan" s={18} />
              <TabText>(!) 0. GF-Ground Floor [0. GF-Ground Floor]</TabText>
              <TabClose><Icon n="closeX" s={9} /></TabClose>
            </Tab>
            <Tab $w={216}><Icon n="sheet" s={18} /><TabText>1 Welcome! - How to use [1 Welcome! - How to use]</TabText></Tab>
            <Tab $w={266} />
            <Tab />
            <Tab><TabText $pad={23}>[All Sections]</TabText></Tab>
            <Tab><Icon n="xcube" s={18} /><TabText $fs={10.6}>[3D Axonometry]</TabText></Tab>
            <TabEnd><Icon n="view" s={21} /><Tri /></TabEnd>
          </TabBar>
          <Canvas>
            <Peach />
            <Origin />
            <Handle $side="l" />
            <Handle $side="r" />
            <Survey>
              <SurveyTitle>SURVEYOR'S DATA</SurveyTitle>
              <SurveyLine>Easting: 450 700.55 m</SurveyLine>
              <SurveyLine>Northing: 4 500 450.35 m</SurveyLine>
            </Survey>
          </Canvas>
          <Quick>
            <QuickZoom>
              <Icon n="zoomPrev" s={16} /><Icon n="zoomNext" s={16} /><Icon n="zoomIn" s={16} />
            </QuickZoom>
            {quickCells.map(([n, t]) => (
              <QuickCell key={t}>
                <QuickIco><Icon n={n} s={16} /></QuickIco>
                <QuickText>{t}</QuickText>
                <Tri $dir="r" />
              </QuickCell>
            ))}
          </Quick>
        </Center>
        <Panel>
          <Grip $w={71} />
          <PanelTabs>
            <PanelTab $on><Icon n="mapHouse" s={20} /></PanelTab>
            <PanelBar />
            <PanelTab><Icon n="viewMap" s={20} /></PanelTab>
            <PanelTab><Icon n="layout" s={20} /></PanelTab>
            <PanelTab><Icon n="publisher" s={20} /></PanelTab>
            <Hamburger><Icon n="hamburger" s={16} /></Hamburger>
          </PanelTabs>
          <Search $mt={8}><Icon n="search" s={15} />Search Project Map</Search>
          <Tree>
            {tree.map(r => (
              <TreeRow key={r.t} $lv={r.lv} $on={r.on}>
                {r.open !== undefined && <Chevron $open={r.open} />}
                <Icon n={r.n} s={18} />
                {r.t}
              </TreeRow>
            ))}
          </Tree>
          <IconStrip $h={33} $gap={14}>
            <Icon n="plusCircle" s={16} /><Icon n="listCard" s={16} /><Icon n="cross" s={16} />
          </IconStrip>
          <PanelHead><Tri />Properties</PanelHead>
          <StoryRow><Icon n="plan" s={13} /><StoryId>0.</StoryId><StoryField>GF-Ground Floor</StoryField></StoryRow>
          <WideBtn $mt={2}>Settings...</WideBtn>
          <HSep />
          <Grip $w={71} />
          <OptionTitle>
            Default: Main Model
            <SideBtn><Icon n="houseBlue" s={18} /></SideBtn>
          </OptionTitle>
          <Search $mt={4}><Icon n="search" s={15} />Search Design Options</Search>
          <OptionList>
            <OptionMain><Icon n="pencil" s={15} /><Icon n="houseWhite" s={15} /><span>(Main Model)</span></OptionMain>
            <OptionGroup><Tri />Roof Options<GroupPlus><Icon n="plus" s={15} /></GroupPlus></OptionGroup>
            <OptionRow><Icon n="eyeOff" s={16} />Roof A</OptionRow>
            <OptionRow><Icon n="eye" s={16} />Roof B</OptionRow>
            <OptionGroup><Tri />Windows<GroupPlus><Icon n="plus" s={15} /></GroupPlus></OptionGroup>
            <OptionRow><Icon n="eyeOff" s={16} />Corner Window</OptionRow>
            <OptionRow><Icon n="eye" s={16} />Curtain Wall</OptionRow>
          </OptionList>
          <IconStrip $h={36} $gap={14} $line>
            <Icon n="plusCircle" s={16} /><Icon n="folderPlus" s={17} /><Icon n="copyPlus" s={16} /><Icon n="rename" s={17} /><Icon n="crossOff" s={15} />
            <EndIcon><Icon n="pencilOff" s={15} /></EndIcon>
          </IconStrip>
          <CaptionRow $mt={7}>Selected: 0 Editable: 0</CaptionRow>
          <WideBtn $mt={5} $off><Icon n="relink" s={15} />Relink</WideBtn>
          <PanelHead $mt={6}><Tri />Focused Editing</PanelHead>
          <CheckRow $mt={12}><Check />Edit Default Only</CheckRow>
          <CheckRow $mt={15}><Check />Fade Environment</CheckRow>
          <SliderRow>
            <SliderBtn><SliderSwatch /><Tri $dir="r" $c="#c9c9c9" /></SliderBtn>
            <SliderTrack><SliderThumb /></SliderTrack>
          </SliderRow>
        </Panel>
      </Middle>
      <Status>
        <StatusText>Click an Element or Draw a Selection Area. Press and Hold Ctrl+Shift to Toggle Element/Sub-Element Selection.</StatusText>
        <StatusEnd>
          <StatusIco><Icon n="cardWin" s={17} /></StatusIco>
          <StatusLogo>GRAPHISOFT <LogoThin>ID</LogoThin></StatusLogo>
        </StatusEnd>
      </Status>

      <Cursor width="14" height="22" viewBox="0 0 14 22">
        <path d="M1 1v16l4-4 3 7 3-1-3-7h5z" fill="#fff" stroke="#111" strokeWidth="1" />
      </Cursor>

      <Dialog>
        <TitleBar>
          <Icon n="logo" s={13} />
          <span>Location Settings</span>
          <TitleSpacer />
          <TitleGlyph>?</TitleGlyph>
          <TitleGlyph>✕</TitleGlyph>
        </TitleBar>
        <SectionHead $mt={11}><Tri /><Icon n="pin" s={20} /><SectionTitle>PROJECT LOCATION</SectionTitle></SectionHead>
        <FormRow $mt={6}>
          <FieldLabel>Project Name:</FieldLabel>
          <Field $w={228} $ro>&lt;PRJ_NAME&gt;</Field>
          <PushBtn $w={118} $ml={12} $mb={1}>Edit...</PushBtn>
        </FormRow>
        <FormRow $mt={9} $h={22}>
          <FieldLabel>Site Full Address:</FieldLabel>
          <Field $w={228} $ro $h={22} $fs={10.7}>&lt;SITE_ADDRESS&gt;&nbsp; &lt;SITE_CITY&gt;&nbsp; &lt;SITE_COUNTRY&gt;</Field>
          <PushBtn $w={118} $ml={12} $mb={2}>Edit...</PushBtn>
        </FormRow>
        <HRule $mt={12} />
        <FormRow $mt={10}>
          <FieldLabel>Latitude:</FieldLabel>
          <Field $w={138} $fs={12.6}>51° 32' 47.1433"</Field>
          <Select $w={64} $ml={6}><SelectText>N</SelectText><ChevronDown /></Select>
          <MiniArrow $ml={8}><Tri $dir="r" /></MiniArrow>
          <PushBtn $w={42} $ml={43}><Icon n="importFile" s={18} /></PushBtn>
          <PushBtn $w={43} $ml={3}><Icon n="exportFile" s={18} /></PushBtn>
        </FormRow>
        <FormRow $mt={9}>
          <FieldLabel>Longitude:</FieldLabel>
          <Field $w={138} $fs={12.6}>0° 28' 44.4720"</Field>
          <Select $w={64} $ml={6}><SelectText>W</SelectText><ChevronDown /></Select>
        </FormRow>
        <FormRow $mt={9}>
          <FieldLabel>Time Zone (UTC):</FieldLabel>
          <Select $w={208} $ml={0}><SelectText>(UTC) Coordinated Universal Time</SelectText><ChevronDown /></Select>
        </FormRow>
        <FormRow $mt={9}>
          <FieldLabel>Altitude (Sea Level):</FieldLabel>
          <Field $w={208}>0.00</Field>
          <MiniArrow $ml={8}><Tri $dir="r" /></MiniArrow>
          <Unit>m</Unit>
        </FormRow>
        <FormRow $mt={9} $h={20}>
          <FieldLabel />
          <PushBtn $w={227} $ml={0} $fs={11.2}>Show in Google Maps...</PushBtn>
          <PushBtn $w={42} $ml={13}><Icon n="info" s={16} /></PushBtn>
        </FormRow>
        <SectionHead $mt={7}><Tri /><Icon n="surveyRing" s={20} /><SectionTitle>SURVEY POINT</SectionTitle></SectionHead>
        <SymbolLabel>Symbol Type:</SymbolLabel>
        <SymbolRow>
          {[0, 1, 2, 3, 4].map(v => <SymbolCell key={v} $on={v === 0}><Sym v={v} /></SymbolCell>)}
        </SymbolRow>
        <PropArea>
          <PropTable>
            <PropHead $h={21}><Tri />POSITION</PropHead>
            <PropRow $on><PropName $on>Easting</PropName><PropValue>-450701</PropValue></PropRow>
            <PropRow><PropName>Northing</PropName><PropValue>0</PropValue></PropRow>
            <PropRow><PropName>Elevation</PropName><PropValue>0</PropValue></PropRow>
            <PropHead $h={22}><Tri />GEOREFERENCING PARAMETERS FOR IFC</PropHead>
            {georef.map(([a, b]) => <PropRow key={a}><PropName>{a}</PropName><PropValue>{b}</PropValue></PropRow>)}
          </PropTable>
          <PropScroll><ScrollTri $up /><ScrollTri /></PropScroll>
        </PropArea>
        <SectionHead $mt={5}><Tri /><Icon n="northRing" s={20} /><SectionTitle>PROJECT NORTH</SectionTitle></SectionHead>
        <NorthArea>
          <NorthLeft>
            <FormRow $mt={0}>
              <FieldLabel $w={148}>North Angle:</FieldLabel>
              <Slot $w={33} $ml={0} $h={21}><Icon n="northAngle" s={24} /></Slot>
              <Field $w={208} $fs={10.6}>90.000000000000°</Field>
              <MiniArrow $ml={8}><Tri $dir="r" /></MiniArrow>
            </FormRow>
          </NorthLeft>
          <Compass width="94" height="94" viewBox="0 0 94 94">
            <circle cx="47" cy="47" r="46" fill="#d0d0d0" stroke="#222" />
            <path d="M47 3 21 83l26-16z" fill="#fff" stroke="#000" strokeWidth="2" />
            <path d="M47 3 72 83 47 67z" fill="#000" stroke="#000" />
          </Compass>
        </NorthArea>
        <HRule $mt={0} />
        <Footer>
          <DlgBtn>Cancel</DlgBtn>
          <DlgBtn $primary>OK</DlgBtn>
        </Footer>
        <ResizeGrip />
      </Dialog>
    </Page>
  );
}
